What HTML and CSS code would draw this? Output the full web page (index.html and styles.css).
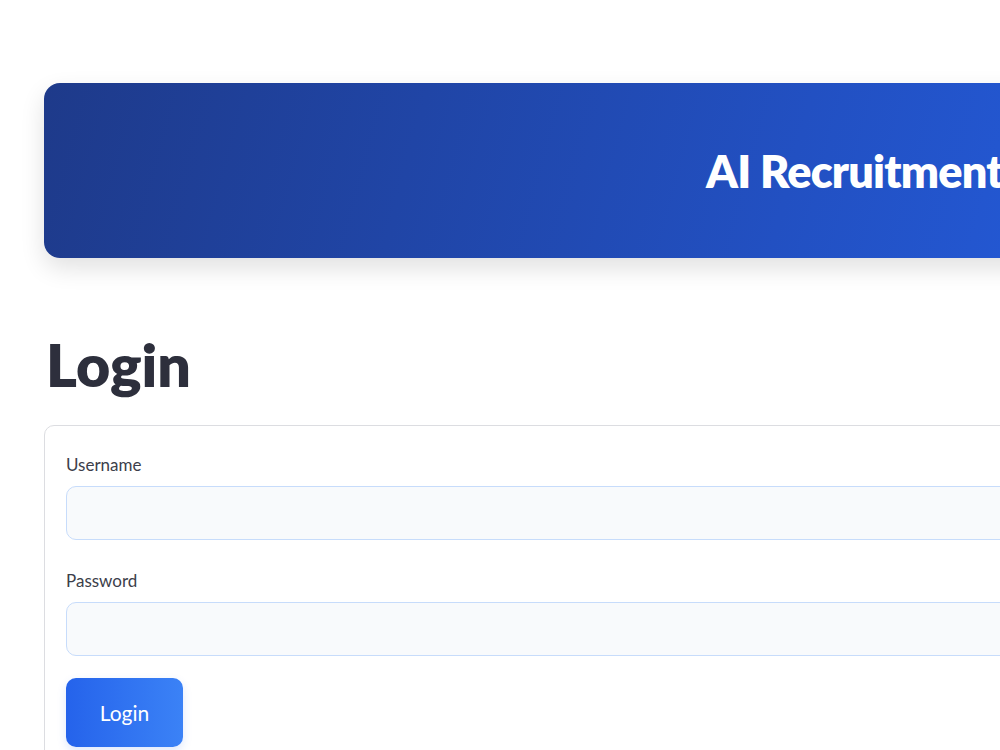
FILE: index.html
```html
<!DOCTYPE html>
<html lang="en">
<head>
  <meta charset="UTF-8" />
  <title>AI Recruitment System</title>
  <link rel="stylesheet" href="styles.css">
</head>
<body>
  <div class="page">
    <header class="hero">
      <h1 class="hero-title">AI Recruitment System</h1>
    </header>

    <h2 class="page-title">Login</h2>

    <form class="login-card" id="loginForm">
      <label class="field">
        <span class="field-label">Username</span>
        <input type="text" class="field-input" />
      </label>
      <label class="field">
        <span class="field-label">Password</span>
        <input type="password" class="field-input" />
      </label>
      <button type="submit" class="login-btn">Login</button>
    </form>
  </div>
</body>
</html>
```

FILE: styles.css
```css
* {
  box-sizing: border-box;
}

html, body {
  overflow: hidden;
}

body {
  margin: 0;
  font-family: Lato, "Noto Sans", sans-serif;
  background: #ffffff;
  color: #31333f;
}

.page {
  width: 1400px;
  padding: 83px 0 0 44px;
}

.hero {
  height: 175px;
  display: flex;
  align-items: center;
  padding-left: 662px;
  border-radius: 16px;
  background: linear-gradient(105deg, #1e3a8a 0%, #2250c2 55%, #2563eb 100%);
  box-shadow: 0 10px 24px rgba(0, 0, 0, 0.12);
}

.hero-title {
  margin: 0;
  color: #ffffff;
  font-size: 45px;
  font-weight: 800;
  white-space: nowrap;
  letter-spacing: -0.8px;
}

.page-title {
  margin: 72px 0 24px 2px;
  font-size: 59px;
  font-weight: 800;
  line-height: 1.2;
  color: #2d2f3c;
}

.login-card {
  display: flex;
  flex-direction: column;
  align-items: flex-start;
  gap: 22px;
  padding: 28px 21px 20px;
  border: 1px solid #dcdde1;
  border-radius: 10px;
}

.field {
  display: flex;
  flex-direction: column;
  gap: 11px;
  width: 100%;
}

.field + .field {
  margin-top: 8px;
}

.field-label {
  font-size: 17px;
  color: #3c3e4a;
}

.field-input {
  height: 54px;
  width: 100%;
  border: 1px solid #c7dcfb;
  border-radius: 10px;
  background: #f8fafc;
  font-size: 16px;
  padding: 0 14px;
}

.login-btn {
  width: 117px;
  height: 69px;
  border: none;
  border-radius: 10px;
  background: linear-gradient(90deg, #2563eb, #3b82f6);
  color: #ffffff;
  font-family: inherit;
  font-size: 21px;
  box-shadow: 0 4px 10px rgba(37, 99, 235, 0.15);
}
```
